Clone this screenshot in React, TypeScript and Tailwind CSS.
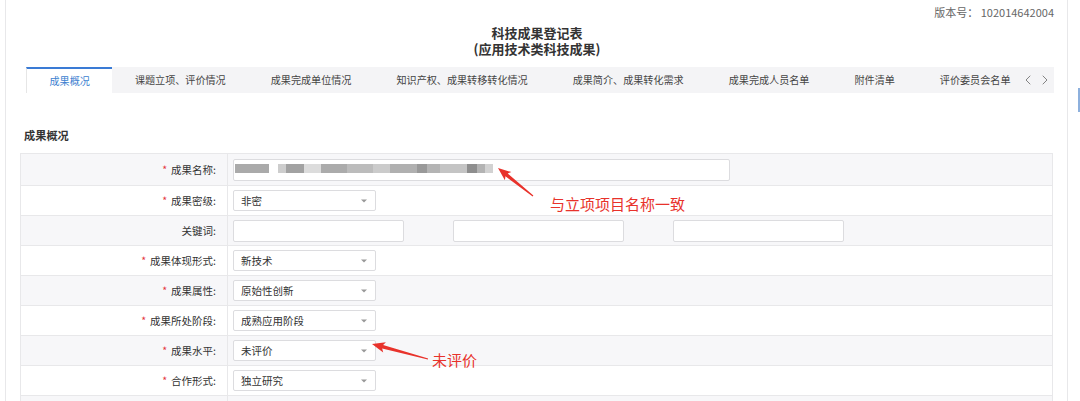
import { ChevronLeft, ChevronRight } from 'lucide-react';

const tabs = [
  '成果概况',
  '课题立项、评价情况',
  '成果完成单位情况',
  '知识产权、成果转移转化情况',
  '成果简介、成果转化需求',
  '成果完成人员名单',
  '附件清单',
  '评价委员会名单',
];

type Row = {
  label: string;
  req: boolean;
  kind: 'name' | 'select' | 'keywords' | 'two';
  value?: string;
};

const rows: Row[] = [
  { label: '成果名称', req: true, kind: 'name' },
  { label: '成果密级', req: true, kind: 'select', value: '非密' },
  { label: '关键词', req: false, kind: 'keywords' },
  { label: '成果体现形式', req: true, kind: 'select', value: '新技术' },
  { label: '成果属性', req: true, kind: 'select', value: '原始性创新' },
  { label: '成果所处阶段', req: true, kind: 'select', value: '成熟应用阶段' },
  { label: '成果水平', req: true, kind: 'select', value: '未评价' },
  { label: '合作形式', req: true, kind: 'select', value: '独立研究' },
  { label: '', req: false, kind: 'two' },
];

// blurred (masked) project name: [width, colour]
const blur: [number, string][] = [
  [34, '#aaaaaa'], [9, 'transparent'], [8, '#cdcdcd'], [18, '#a2a2a2'], [17, '#dcdcdc'],
  [26, '#ababab'], [26, '#bcbcbc'], [17, '#cbcbcb'], [27, '#b0b0b0'], [10, '#999999'],
  [13, '#b4b4b4'], [27, '#c4c4c4'], [10, '#8e8e8e'], [8, '#b3b3b3'], [8, '#d2d2d2'],
];

function Select({ value }: { value: string }) {
  return (
    <div className="flex h-[21px] w-[143px] items-center justify-between rounded-[2px] border border-[#dcdcdf] bg-white pl-[7px] pr-[8px]">
      <span className="text-[10.5px] text-[#333]">{value}</span>
      <svg width="6" height="4" viewBox="0 0 6 4">
        <path d="M0 0.5 L6 0.5 L3 3.5 Z" fill="#999" />
      </svg>
    </div>
  );
}

function Input({ w }: { w: string }) {
  return <div className={`h-[22px] rounded-[2px] border border-[#dcdcdf] bg-white ${w}`} />;
}

function Arrow({ x, y, tx, ty }: { x: number; y: number; tx: number; ty: number }) {
  const dx = tx - x;
  const dy = ty - y;
  const L = Math.sqrt(dx * dx + dy * dy);
  const a = (Math.atan2(dy, dx) * 180) / Math.PI;
  const pts = `0,-0.6 ${L - 11},-1.8 ${L - 13},-5.2 ${L},0 ${L - 13},5.2 ${L - 11},1.8 0,0.6`;
  return <polygon points={pts} fill="#e8322b" transform={`translate(${x} ${y}) rotate(${a})`} />;
}

export default function App() {
  return (
    <div
      className="relative flex h-[401px] w-[1080px] overflow-hidden bg-white text-[#333]"
      style={{ fontFamily: '"Noto Sans CJK SC", "Noto Sans", sans-serif' }}
    >
      <div className="w-[5px] shrink-0" />
      <div className="w-[1063px] shrink-0 border-x border-[#e8e8ea] pl-[14px] pr-[13px]">
        {/* version */}
        <div className="flex h-[24px] items-center justify-end text-[11px] text-[#666]">
          版本号：&nbsp;102014642004
        </div>
        {/* title */}
        <h1 className="mt-[1px] text-center text-[13px] font-bold leading-[16px] text-[#333]">
          科技成果登记表
          <br />
          (应用技术类科技成果)
        </h1>
        {/* tabs */}
        <div className="ml-[6px] mt-[10px] flex h-[26px] bg-[#f4f4f6]">
          <div className="flex flex-1 overflow-hidden">
            {tabs.map((t, i) => (
              <div
                key={t}
                className={`flex shrink-0 items-center whitespace-nowrap px-[22.5px] text-[10.1px] ${
                  i === 0
                    ? 'border-l border-t-2 border-l-[#e6e6e6] border-t-[#3a7bd5] bg-white text-[#3d7fd0]'
                    : 'text-[#444]'
                }`}
              >
                {t}
              </div>
            ))}
          </div>
          <div className="flex w-[36px] shrink-0 items-center gap-[1px] pl-[2px] text-[#666]">
            <ChevronLeft size={16} strokeWidth={1.2} />
            <ChevronRight size={16} strokeWidth={1.2} />
          </div>
        </div>
        {/* heading */}
        <div className="ml-[4px] mt-[35px] text-[11.2px] font-bold leading-[15px] text-[#333]">成果概况</div>
        {/* form table */}
        <div className="mr-[1px] mt-[10px] border-x border-t border-[#e8e8ea]">
          {rows.map((r, i) => (
            <div
              key={i}
              className={`grid grid-cols-[207px_1fr] border-b border-[#e8e8ea] ${
                i === 0 ? 'h-[32px]' : 'h-[30px]'
              } ${i % 2 === 0 ? 'bg-[#f7f7f9]' : 'bg-white'}`}
            >
              <div className="flex items-center justify-end border-r border-[#e8e8ea] pr-[11px] text-[10.5px] text-[#333]">
                {r.req && <span className="mr-[4px] text-[#e4393c]">*</span>}
                {r.label && <span>{r.label}:</span>}
              </div>
              <div className={`flex pl-[5px] ${r.kind === 'two' ? 'items-end' : 'items-center'}`}>
                {r.kind === 'name' && (
                  <div className="relative h-[22px] w-[497px] rounded-[2px] border border-[#dcdcdf] bg-white">
                    <div className="absolute left-[1px] top-[4px] flex h-[9px] blur-[0.6px]">
                      {blur.map(([w, c], k) => (
                        <div key={k} style={{ width: w, background: c }} />
                      ))}
                    </div>
                  </div>
                )}
                {r.kind === 'select' && <Select value={r.value ?? ''} />}
                {r.kind === 'keywords' && (
                  <div className="flex gap-[49px]">
                    <Input w="w-[171px]" />
                    <Input w="w-[171px]" />
                    <Input w="w-[171px]" />
                  </div>
                )}
                {r.kind === 'two' && (
                  <div className="flex h-[5px] gap-[49px] overflow-hidden">
                    <Input w="w-[252px]" />
                    <Input w="w-[253px]" />
                  </div>
                )}
              </div>
            </div>
          ))}
        </div>
      </div>
      <div className="flex-1">
        <div className="ml-auto mt-[88px] h-[24px] w-[2px] bg-[#8db0dd]" />
      </div>

      {/* annotations */}
      <div className="absolute left-[550px] top-[194px] text-[15px] leading-[20px] text-[#e8322b]">与立项项目名称一致</div>
      <div className="absolute left-[432px] top-[350px] text-[15px] leading-[20px] text-[#e8322b]">未评价</div>
      <svg className="pointer-events-none absolute left-0 top-0" width="1080" height="401">
        <Arrow x={533} y={196} tx={498} ty={168} />
        <Arrow x={428} y={359} tx={372} ty={344} />
      </svg>
    </div>
  );
}
